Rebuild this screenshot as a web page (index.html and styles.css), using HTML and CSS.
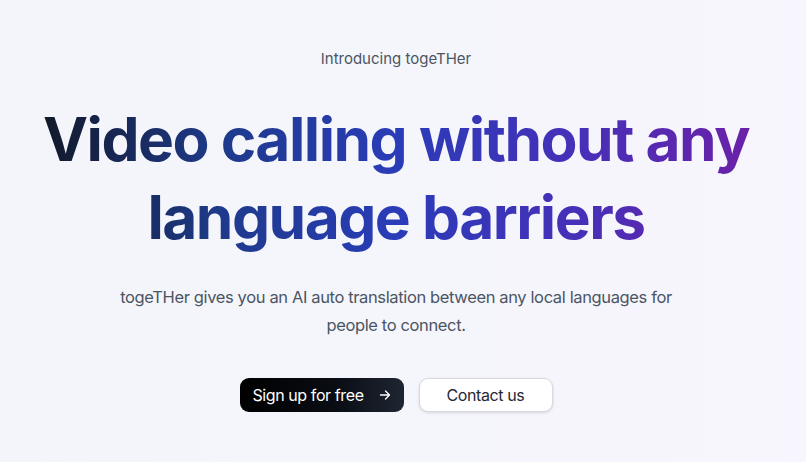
FILE: index.html
```html
<!DOCTYPE html>
<html lang="en">
<head>
<meta charset="utf-8">
<title>togeTHer</title>
<link rel="stylesheet" href="styles.css">
</head>
<body>
<main class="hero">
  <p class="eyebrow">Introducing togeTHer</p>
  <h1 class="headline">Video calling without any language barriers</h1>
  <p class="lead">togeTHer gives you an AI auto translation between any local languages for people to connect.</p>
  <div class="actions">
    <a class="btn btn-primary" href="#">Sign up for free <span class="arrow">
      <svg width="12" height="12" viewBox="0 0 12 12" fill="none" stroke="currentColor" stroke-width="1.3" stroke-linecap="round" stroke-linejoin="round"><path d="M1.5 6h9M6.5 2l4 4-4 4"/></svg>
    </span></a>
    <a class="btn btn-secondary" href="#">Contact us</a>
  </div>
</main>
</body>
</html>
```
FILE: styles.css
```css
* { box-sizing: border-box; }
html, body { margin: 0; height: 100%; }
body {
  font-family: Inter, "Noto Sans", sans-serif;
  background: linear-gradient(90deg, #f4f5fb 0%, #f5f5fc 50%, #f7f5fd 100%);
  color: #111827;
}
.hero {
  display: flex;
  flex-direction: column;
  align-items: center;
  text-align: center;
  padding: 49px 14px 0 0;
}
.eyebrow {
  margin: 0;
  font-size: 15px;
  line-height: 20px;
  color: #4b5563;
}
.headline {
  margin: 31px 0 0;
  max-width: 716px;
  font-size: 60.4px;
  line-height: 78px;
  font-weight: 700;
  letter-spacing: -0.025em;
  background: linear-gradient(90deg, #111827 0%, #1e3a8a 25%, #2a3cb8 50%, #4630b8 75%, #6b21a8 100%);
  -webkit-background-clip: text;
  background-clip: text;
  color: transparent;
}
.lead {
  margin: 27px 0 0;
  max-width: 580px;
  font-size: 16.5px;
  line-height: 28px;
  letter-spacing: -0.37px;
  color: #4b5563;
}
.actions {
  display: flex;
  gap: 15px;
  margin-top: 39px;
}
.btn {
  display: inline-flex;
  align-items: center;
  justify-content: center;
  height: 34px;
  border-radius: 9px;
  font-size: 16px;
  letter-spacing: -0.4px;
  text-decoration: none;
}
.btn-primary {
  width: 164px;
  gap: 15px;
  color: #fff;
  background: linear-gradient(90deg, #000 0%, #0a0d14 60%, #1f2633 100%);
}
.arrow { display: inline-flex; }
.btn-secondary {
  width: 134px;
  color: #1f2937;
  background: #fff;
  border: 1px solid #d8d9e0;
  box-shadow: 0 1px 3px rgba(0,0,0,0.12);
}
```
